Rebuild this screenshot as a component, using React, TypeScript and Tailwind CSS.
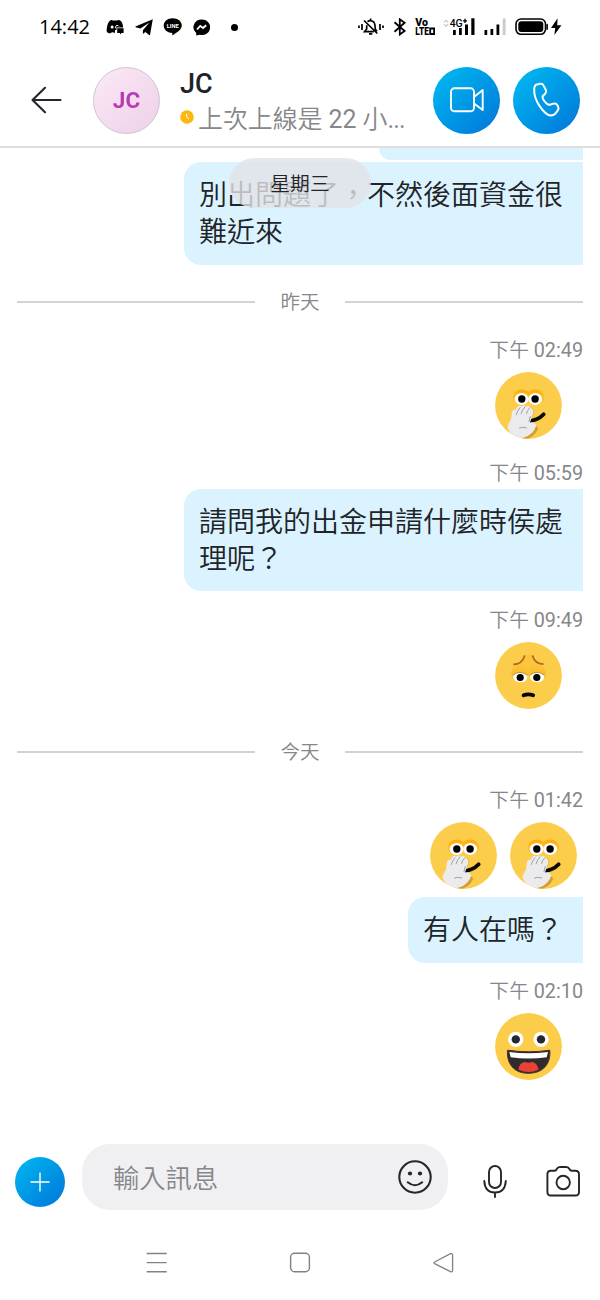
import React from "react";

const cjk = "font-['Roboto','Noto_Sans_CJK_TC',sans-serif]";

function StatusBar() {
  return (
    <div className="flex h-[54px] shrink-0 items-center text-black">
      <span className="ml-[39px] w-[67px] font-['Open_Sans',sans-serif] text-[20px] leading-[54px]">14:42</span>
      <svg className="h-4 w-[18px]" viewBox="106 19 18 16">
        <path d="M110.5 20.2 Q112 19.4 113 20.6 H117 Q118 19.4 119.5 20.2 Q122.6 21.2 123.2 27.6 H116.5 V30 H115 V33 Q112.5 31.8 111.5 32.6 Q110.5 34 108.5 33 Q106.5 32.6 106.6 30.5 Q107 22.5 110.5 20.2Z" />
        <circle cx="112.1" cy="27" r="1.5" fill="white" />
        <path d="M115.6 28.2 V26.8 a1.7 1.7 0 0 1 3.2 -.4" fill="none" stroke="white" strokeWidth="1" />
        <path d="M117.2 28.2 H123.6 V33 H121.4 L120 34.6 V33 H117.2Z" />
      </svg>
      <svg className="ml-[11px] h-[17px] w-[18px]" viewBox="135 19 18 17">
        <path d="M135.4 26.4 L152.8 19.2 L150 34.9 Q149.6 35.4 148.8 34.8 L145.3 31.9 L142.9 34 V30.2 L149.4 22.6 L140.4 28.6 L135.6 27.3Z" />
      </svg>
      <svg className="ml-[10px] h-[18px] w-[19px]" viewBox="163 18 19 18">
        <path d="M172.6 18.2 C178 18.2 181.8 21.3 181.8 25.6 C181.8 30 176 33 172.8 35.2 Q172.2 35.4 172.2 33 C167 32.8 163.7 29.7 163.7 25.6 C163.7 21.3 167.5 18.2 172.6 18.2Z" />
        <text x="172.7" y="27.9" textAnchor="middle" fill="white" fontSize="5.7" fontWeight="700" fontFamily="Roboto">LINE</text>
      </svg>
      <svg className="ml-[11px] h-[17px] w-[17px]" viewBox="193 18.5 17 17">
        <path d="M201.6 19 A8.2 7.8 0 1 1 199.8 34.3 L196.2 35 V32.6 A8.2 7.8 0 0 1 201.6 19Z" />
        <path d="M197 29 L200.2 25.4 L203 27.5 L206.2 24.8" fill="none" stroke="white" strokeWidth="1.8" />
      </svg>
      <span className="ml-[21px] size-[7px] rounded-full bg-black" />
      <svg className="ml-[120px] h-[18px] w-[27px]" viewBox="358 18 27 18" fill="none" stroke="black" strokeWidth="1.7">
        <path d="M359 25.5 V28 M362 24 V30 M380 24 V30 M383 25.5 V28" />
        <path d="M367.5 21.7 Q370.5 19.4 373.7 22 Q375.2 23.5 375.2 29 L377 31.5 M373.8 31.7 H364.5 L366.7 29 V25.3 M370.6 18.4 V20.5 M364 20.5 L377.3 33.5 M369 33.8 H372.3" />
      </svg>
      <svg className="ml-[8px] h-[18px] w-[14px]" viewBox="393 18 14 18" fill="none" stroke="black" strokeWidth="1.8">
        <path d="M394.5 22.3 L404.6 31 L399.8 34.5 V19.3 L404.6 22.8 L394.5 31.7" />
      </svg>
      <svg className="ml-[8px] h-[18px] w-[21px]" viewBox="415 18 21 18">
        <g fontFamily="Roboto" fontWeight="900" fontSize="10">
          <text x="415.3" y="26.3" textLength="12.7" lengthAdjust="spacingAndGlyphs">Vo</text>
          <text x="415.3" y="35" textLength="13.7" lengthAdjust="spacingAndGlyphs">LTE</text>
        </g>
        <path d="M430.2 28.5 H434.1 V34 H430.2Z" fill="none" stroke="black" strokeWidth="1.8" />
      </svg>
      <svg className="ml-[7px] h-[18px] w-[32px]" viewBox="443 18 32 18">
        <path d="M444 22.3 L446 20.3 L448 22.3 M444 24.3 L446 26.3 L448 24.3" fill="none" stroke="#ccc" strokeWidth="1.3" />
        <path d="M453 30 h2.8 v5 h-2.8z M459 28 h2.8 v7 h-2.8z M465 24.5 h3 v10.5 h-3z M471.3 18.3 h3.2 v16.7 h-3.2z" />
        <text x="449.7" y="26.6" fontFamily="Roboto" fontWeight="500" fontSize="10.5" textLength="13" lengthAdjust="spacingAndGlyphs">4G</text>
        <path d="M465 18.8 V23 M463 20.9 H467" stroke="black" strokeWidth="1.3" />
      </svg>
      <svg className="ml-[9px] h-[18px] w-[22px]" viewBox="484 18 22 18">
        <path d="M484.5 30 h2.7 v5 h-2.7z M490.5 29 h2.7 v6 h-2.7z M496.5 24.5 h2.8 v10.5 h-2.8z" />
        <path d="M502.7 18.5 h2.9 v16.5 h-2.9z" fill="#ccc" />
      </svg>
      <svg className="ml-[9px] h-[18px] w-[47px]" viewBox="515 18 47 18">
        <rect x="516" y="19" width="29.5" height="15.3" rx="5" fill="none" stroke="black" strokeWidth="1.6" />
        <rect x="518.3" y="21.2" width="25" height="10.9" rx="3" />
        <path d="M546.8 24.2 h.7 v5.2 h-.7z" stroke="black" strokeWidth=".8" />
        <path d="M557.6 18.3 L551 28 H555.2 L554.4 35.1 L561.4 25.3 H557.2Z" />
      </svg>
    </div>
  );
}

function RoundButton({ children }: { children: React.ReactNode }) {
  return (
    <button className="flex size-[67px] shrink-0 items-center justify-center rounded-full bg-linear-to-br from-[#00bcf2] to-[#0075d8]">
      {children}
    </button>
  );
}

function Header() {
  return (
    <header className="flex h-[94px] shrink-0 items-center border-b-2 border-[#dedfe0] bg-white">
      <svg className="ml-[31px] h-7 w-8" viewBox="31 86 32 28" fill="none" stroke="#24262b" strokeWidth="2.1" strokeLinecap="round" strokeLinejoin="round">
        <path d="M60.5 100 H32.5 M45 87.8 L32.5 100 L45 112.2" />
      </svg>
      <div className="ml-[30px] flex size-[67px] items-center justify-center rounded-full border border-[#cfc4d2] bg-linear-to-br from-[#fbe9f6] to-[#eed0e8]">
        <span className="bg-linear-to-b from-[#a83db5] to-[#c837ab] bg-clip-text pt-px font-['Roboto',sans-serif] text-[22.5px] font-bold text-transparent">JC</span>
      </div>
      <div className="ml-5 flex w-[253px] flex-col pt-1">
        <span className="h-[34px] font-['Roboto',sans-serif] text-[27px] leading-[34px] font-medium text-[#212327]">JC</span>
        <div className="flex h-9 items-center">
          <svg className="mb-[4px] size-[14px]" viewBox="0 0 14 14">
            <circle cx="7" cy="7" r="6.8" fill="#fcb712" />
            <path d="M6.6 3.7 V7 L9 9" fill="none" stroke="white" strokeWidth="1" />
          </svg>
          <span className="ml-[4px] pt-px text-[24.9px] leading-9 font-[350] whitespace-nowrap text-[#85878b]">
            上次上線是 <span className="font-normal">22</span> 小<span className="font-normal tracking-[-0.8px]">...</span>
          </span>
        </div>
      </div>
      <RoundButton>
        <svg className="h-[26px] w-[34px]" viewBox="450 87 34 26" fill="none" stroke="white" strokeWidth="1.9" strokeLinejoin="round">
          <rect x="451" y="88.3" width="23" height="23" rx="3.5" />
          <path d="M474 97 L482.7 90 V110 L474 103.5" />
        </svg>
      </RoundButton>
      <div className="w-[13px]" />
      <RoundButton>
        <svg className="h-[36px] w-[30px]" viewBox="532 82 30 36" fill="none" stroke="white" strokeWidth="2" strokeLinejoin="round">
          <path d="M536.2 84.7 L540 83.8 Q542.5 83.3 543.6 85.6 L545.9 90 Q546.7 92.2 545.2 93.8 L542.6 96.2 Q542 99.3 546.6 103.4 Q548.6 105.2 550.6 104.5 L553.7 103.6 Q555.7 103.2 556.9 104.6 L558.1 106.5 Q559.2 108.5 557.5 110.8 Q554.8 115.5 550.5 115.5 C544 114.5 534 100.5 534.2 90.5 Q534 86 536.2 84.7Z" />
        </svg>
      </RoundButton>
    </header>
  );
}

function Divider({ label }: { label: string }) {
  return (
    <div className="ml-[17px] flex h-[74px] shrink-0 items-center">
      <div className="h-[1.5px] w-[238px] bg-[#d2d3d5]" />
      <span className="w-[90px] pt-[2px] text-center text-[19.5px] leading-6 font-[350] text-[#85878b]">{label}</span>
      <div className="h-[1.5px] w-[238px] bg-[#d2d3d5]" />
    </div>
  );
}

function Time({ children }: { children: string }) {
  return (
    <div className="mr-[17px] h-[22px] shrink-0 text-right text-[19.8px] leading-[24px] font-[350] text-[#85878b]">
      下午 <span className="font-normal">{children}</span>
    </div>
  );
}

function Bubble({ className, children }: { className: string; children?: React.ReactNode }) {
  return (
    <div className={`mr-[17px] shrink-0 self-end rounded-l-[17px] bg-[#dbf3fe] px-[15px] text-[28px] leading-[37px] font-[350] text-[#212327] ${className}`}>
      {children}
    </div>
  );
}

function Speechless({ id }: { id: string }) {
  return (
    <svg className="size-[67px] shrink-0" viewBox="0 0 67 67">
      <defs>
        <clipPath id={id}><circle cx="33.5" cy="33.5" r="33.4" /></clipPath>
        <linearGradient id={`${id}-lid`} x1="0" x2="0" y1="0" y2="1">
          <stop stopColor="#ffad05" />
          <stop offset="1" stopColor="#ffc936" />
        </linearGradient>
      </defs>
      <circle cx="33.5" cy="33.5" r="33.4" fill="#fccd4b" />
      <g clipPath={`url(#${id})`}>
        <ellipse cx="26.8" cy="25.4" rx="8.9" ry="8" fill={`url(#${id}-lid)`} />
        <ellipse cx="40.2" cy="25.4" rx="8.9" ry="8" fill={`url(#${id}-lid)`} />
        <ellipse cx="26.6" cy="27" rx="7" ry="6" fill="white" />
        <ellipse cx="40.2" cy="27" rx="7" ry="6" fill="white" />
        <circle cx="26.8" cy="27" r="3.7" />
        <circle cx="40.1" cy="27" r="3.7" />
        <path d="M32 49.5 Q43 48.5 48.7 42.3" fill="none" stroke="#090907" strokeWidth="3.8" strokeLinecap="round" />
        <path d="M24 66 Q36 63 41 54.5 Q43.5 54.5 42.8 57.5 Q39 66 30 67Z" fill="#d49e34" />
        <path d="M37 36 Q41 41 36.5 46Z" fill="#deb045" />
        <path d="M12.5 56 Q13 51 16 47.5 L17 40 Q18 37.2 20.3 38 L22.7 34.6 Q24.5 33 26.2 34.6 Q29.5 32.4 31 34.6 Q34.5 33 35.8 35.8 Q38.8 37.6 38.2 41 L35 50.5 Q40.5 49 41 54 Q38.5 62.5 29 65.5 Q22 68 18 65Z" fill="#ebebee" />
        <path d="M21.3 42.5 Q22 39 25 35.7 M26.2 41.5 Q27 38 30 34.8 M31.5 41.5 Q32 38.5 34.8 35.8 M24.5 56 Q27 54.7 31.5 55.8 M35.3 44.5 L34 49.5" fill="none" stroke="#96999e" strokeWidth=".9" strokeLinecap="round" />
      </g>
    </svg>
  );
}

function Worried() {
  return (
    <svg className="size-[67px]" viewBox="0 0 67 67">
      <defs>
        <linearGradient id="lids" x1="0" x2="0" y1="0" y2="1">
          <stop stopColor="#fcc439" />
          <stop offset="1" stopColor="#f9b51f" />
        </linearGradient>
      </defs>
      <circle cx="33.5" cy="33.5" r="33.4" fill="#fccd4b" />
      <path d="M28.5 13 H38.5 Q39 19 43 23 L33.5 27 L24 23 Q28.5 18 28.5 13Z" fill="#fabd31" opacity=".5" />
      <path d="M18.4 22.5 Q27 22.3 29.7 13.4 M48.6 22.2 Q40 22 37.4 13.4" fill="none" stroke="#b7681f" strokeWidth="1.8" />
      <ellipse cx="25" cy="31" rx="8.8" ry="8" fill="url(#lids)" />
      <ellipse cx="42" cy="31" rx="8.8" ry="8" fill="url(#lids)" />
      <path d="M17.8 33.4 Q25 27.5 32.5 33.4 Q32.5 40.3 25 40.3 Q18 39.5 17.8 33.4Z M34.7 33.4 Q42 27.5 49.3 33.4 Q49 40.3 42 40.3 Q34.7 39.5 34.7 33.4Z" fill="white" />
      <path d="M17.5 33.4 Q25 27.3 32.5 33.4 M34.7 33.4 Q42 27.3 49.5 33.4" fill="none" stroke="#a98337" strokeWidth=".8" />
      <circle cx="25.2" cy="35.5" r="3.6" />
      <circle cx="41.8" cy="35.5" r="3.6" />
      <path d="M28.6 53.2 Q33.3 51.4 38.2 53.2" fill="none" stroke="#080704" strokeWidth="3.8" strokeLinecap="round" />
    </svg>
  );
}

function Laugh() {
  return (
    <svg className="size-[67px]" viewBox="0 0 67 67">
      <circle cx="33.5" cy="33.5" r="33.4" fill="#fccd4b" />
      <circle cx="20.8" cy="26.4" r="7.6" fill="white" />
      <circle cx="46" cy="26.4" r="7.6" fill="white" />
      <circle cx="20.8" cy="26.4" r="4.2" fill="#25272c" />
      <circle cx="46" cy="26.4" r="4.2" fill="#25272c" />
      <path d="M12.5 37.2 Q33.5 40.3 54.8 37.2 C56 51 48 60.3 33.5 60.3 C19 60.3 11.5 51 12.5 37.2Z" fill="#302b2c" stroke="#512e23" strokeWidth="1" />
      <path d="M14.3 39 Q33.5 41.5 53 39 L51.7 44.3 Q33.5 46.8 15.7 44.3Z" fill="white" />
      <path d="M23.5 56.8 Q24 49.5 30 49 Q33.5 50.5 37 49 Q42.7 50 43.5 56.8 Q34 61.3 23.5 56.8Z" fill="#e84237" />
    </svg>
  );
}

function Messages() {
  return (
    <main className="relative flex h-[982px] shrink-0 flex-col overflow-hidden">
      <Bubble className="h-3 w-[204px] rounded-tl-none" />
      <Bubble className="mt-[2px] h-[103px] w-[399px] pt-[15px]">別出問題了，不然後面資金很難近來</Bubble>
      <div className="absolute top-[10px] left-[229px] flex h-[50px] w-[142px] items-center justify-center rounded-full bg-[#e2e2e7]/80 pt-[3px] text-[19.8px] font-[350] text-[#212327]">
        星期三
      </div>
      <Divider label="昨天" />
      <Time>02:49</Time>
      <div className="mt-[11px] mr-[38px] h-[66px] self-end"><Speechless id="speechless-a" /></div>
      <div className="h-6 shrink-0" />
      <Time>05:59</Time>
      <Bubble className="mt-[5px] h-[102px] w-[399px] pt-[15px]">請問我的出金申請什麼時侯處理呢？</Bubble>
      <div className="h-[18px] shrink-0" />
      <Time>09:49</Time>
      <div className="mt-[11px] mr-[38px] h-[66px] self-end"><Worried /></div>
      <div className="h-[7px] shrink-0" />
      <Divider label="今天" />
      <Time>01:42</Time>
      <div className="mt-[11px] mr-[23px] flex h-[66px] gap-[13px] self-end">
        <Speechless id="speechless-b" />
        <Speechless id="speechless-c" />
      </div>
      <Bubble className="mt-[9px] h-[66px] w-[175px] pt-[15px]">有人在嗎？</Bubble>
      <div className="h-[17px] shrink-0" />
      <Time>02:10</Time>
      <div className="mt-[11px] mr-[38px] self-end"><Laugh /></div>
    </main>
  );
}

function Composer() {
  return (
    <div className="flex h-[94px] shrink-0 items-center">
      <button className="mt-[9px] ml-[15px] flex size-[50px] items-center justify-center rounded-full bg-linear-to-br from-[#00b9f1] to-[#0075d8]">
        <svg className="size-5" viewBox="0 0 20 20" stroke="white" strokeWidth="1.4"><path d="M10 .5 V19.5 M.5 10 H19.5" /></svg>
      </button>
      <div className="ml-[17px] flex h-[66px] w-[366px] items-center rounded-[28px] bg-[#f0f0f2] pl-[31px]">
        <span className="w-[285px] pt-[4px] text-[26.3px] leading-9 font-[350] text-[#85878b]">輸入訊息</span>
        <svg className="mb-px size-[34px]" viewBox="0 0 34 34" fill="none" stroke="#24262b" strokeWidth="2.1" strokeLinecap="round">
          <circle cx="17" cy="17" r="15.7" />
          <path d="M9.7 22.3 Q17 28.2 24.2 22.3" />
          <circle cx="12" cy="13.5" r="2.1" fill="#24262b" stroke="none" />
          <circle cx="22" cy="13.5" r="2.1" fill="#24262b" stroke="none" />
        </svg>
      </div>
      <svg className="mt-[9px] ml-[35px] h-[34px] w-[24px]" viewBox="483 1165 24 34" fill="none" stroke="#24262b" strokeWidth="1.9" strokeLinecap="round">
        <rect x="489" y="1166" width="12" height="22" rx="6" />
        <path d="M484.3 1181 Q484.8 1192.5 495 1192.5 Q505.2 1192.5 505.8 1181 M495 1192.5 V1197" />
      </svg>
      <svg className="mt-[9px] ml-[39px] h-[34px] w-[35px]" viewBox="546 1165 35 34" fill="none" stroke="#24262b" strokeWidth="1.9" strokeLinejoin="round">
        <path d="M550.8 1170.8 H554.5 Q556 1170.8 556.8 1169 Q557.7 1167 560 1167 H566 Q568.5 1167 569.4 1169 Q570.2 1170.8 571.8 1170.8 H575.4 Q579 1170.8 579 1174.4 V1192 Q579 1195.5 575.4 1195.5 H550.8 Q547.4 1195.5 547.4 1192 V1174.4 Q547.4 1170.8 550.8 1170.8Z" />
        <circle cx="563.2" cy="1182.5" r="6.7" />
      </svg>
    </div>
  );
}

function NavBar() {
  return (
    <nav className="flex h-[76px] shrink-0 items-center pt-[2px] pl-[146px]">
      <svg className="size-[22px]" viewBox="0 0 22 22" stroke="#828282" strokeWidth="1.4"><path d="M.7 1.5 H20.7 M.7 10.6 H20.7 M.7 19.8 H20.7" /></svg>
      <svg className="ml-[121px] size-[22px]" viewBox="0 0 22 22" fill="none" stroke="#828282" strokeWidth="1.4"><rect x="1.6" y="1.3" width="18.8" height="18.5" rx="4" /></svg>
      <svg className="ml-[121px] size-[22px]" viewBox="0 0 22 22" fill="none" stroke="#828282" strokeWidth="1.3" strokeLinejoin="round"><path d="M2.6 10 L18.5 1.6 Q20.4 1.2 20.6 2.8 V18.4 Q20.4 20.3 18.5 19.7 L2.6 11.6 Q1.2 10.8 2.6 10Z" /></svg>
    </nav>
  );
}

export default function App() {
  return (
    <div lang="zh-Hant" className={`flex h-[1300px] w-[600px] flex-col overflow-hidden bg-white ${cjk}`}>
      <StatusBar />
      <Header />
      <Messages />
      <Composer />
      <NavBar />
    </div>
  );
}
